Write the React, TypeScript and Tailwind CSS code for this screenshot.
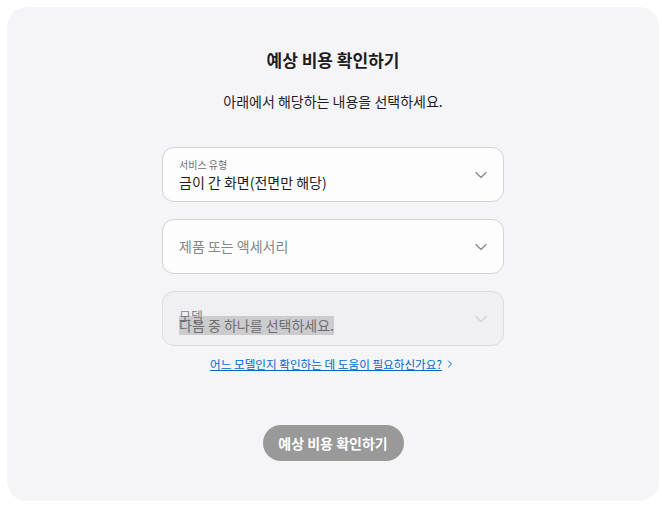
import { ChevronDown, ChevronRight } from "lucide-react";

const font = { fontFamily: '"Noto Sans CJK KR", "Noto Sans", sans-serif' };

const Chevron = ({ light }: { light?: boolean }) => (
  <ChevronDown
    className={light ? "h-[20px] w-[20px] text-[#d2d2d7]" : "h-[20px] w-[20px] text-[#8e8e93]"}
    strokeWidth={1.6}
  />
);

export default function App() {
  return (
    <div className="min-h-screen bg-white pt-[7px]" style={font}>
      <div className="ml-[7px] flex h-[494px] w-[652px] flex-col items-center rounded-[20px] bg-[#f5f5f7] pt-[41px]">
        <h2 className="text-[17px] font-bold leading-[24px] text-[#1d1d1f]">예상 비용 확인하기</h2>
        <p className="mt-[19px] text-[14px] leading-[20px] text-[#1d1d1f]">
          아래에서 해당하는 내용을 선택하세요.
        </p>

        <div className="mt-[36px] flex w-[342px] flex-col gap-[17px]">
          <div className="flex h-[55px] items-center justify-between rounded-[12px] border border-[#d2d2d7] bg-[#fdfdfd] pl-[16px] pr-[12px]">
            <div className="flex flex-col">
              <span className="text-[10px] leading-[14px] text-[#6e6e73]">서비스 유형</span>
              <span className="text-[14px] leading-[20px] text-[#1d1d1f]">금이 간 화면(전면만 해당)</span>
            </div>
            <Chevron />
          </div>

          <div className="flex h-[55px] items-center justify-between rounded-[12px] border border-[#d2d2d7] bg-[#fdfdfd] pl-[16px] pr-[12px]">
            <span className="text-[14px] text-[#86868b]">제품 또는 액세서리</span>
            <Chevron />
          </div>

          <div className="relative flex h-[55px] items-center justify-between rounded-[12px] border border-[#dcdce0] bg-[#f0f0f2] pl-[16px] pr-[12px]">
            <span className="absolute left-[16px] top-[16px] text-[13px] leading-[16px] text-[#86868b]">모델</span>
            <span className="relative mt-[14px] bg-black/15 text-[14px] leading-[19px] text-[#6e6e73]">
              다음 중 하나를 선택하세요.
            </span>
            <Chevron light />
          </div>
        </div>

        <a className="mt-[9px] flex items-center text-[11.6px] leading-[18px] text-[#0066cc] underline">
          어느 모델인지 확인하는 데 도움이 필요하신가요?
          <ChevronRight className="ml-[2px] h-3 w-3" strokeWidth={2} />
        </a>

        <button className="mt-[52px] h-[36px] w-[141px] rounded-full bg-[#999999] text-[14px] font-bold text-white">
          예상 비용 확인하기
        </button>
      </div>
    </div>
  );
}
